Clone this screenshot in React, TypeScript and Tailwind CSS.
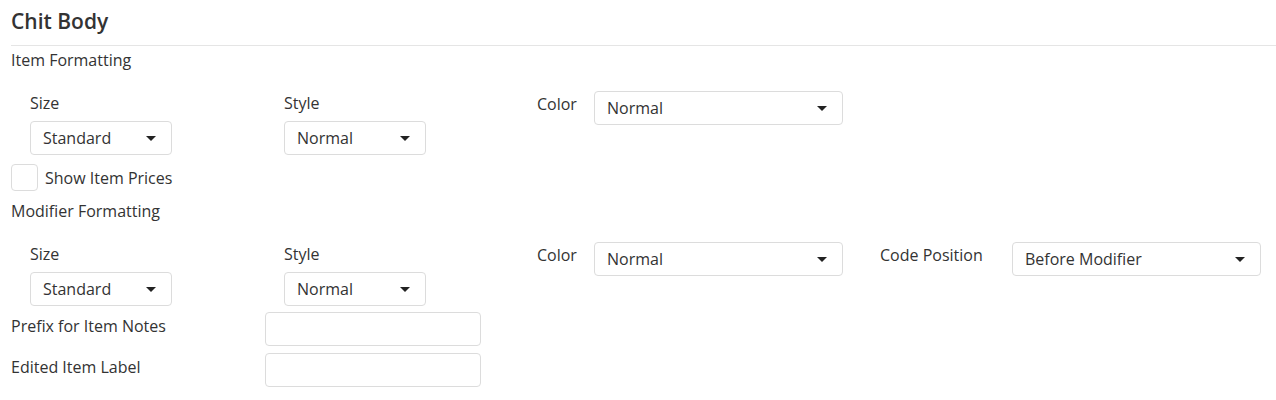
import type { ReactNode } from 'react'

function Caret() {
  return (
    <svg width="10" height="5" viewBox="0 0 10 5" className="shrink-0">
      <path d="M0 0 L10 0 L5 5 Z" fill="#222" />
    </svg>
  )
}

function Select({ value, width }: { value: string; width: string }) {
  return (
    <div
      className={`${width} h-[34px] flex items-center justify-between pl-[12px] pr-[15px] border border-[#dcdcdc] rounded-[4px] bg-white text-[#333]`}
    >
      <span>{value}</span>
      <Caret />
    </div>
  )
}

function Stacked({ label, children, width }: { label: string; children: ReactNode; width: string }) {
  return (
    <div className={`${width} shrink-0 flex flex-col`}>
      <div className="leading-[24px]">{label}</div>
      <div className="mt-[6px]">{children}</div>
    </div>
  )
}

function Inline({ label, children, width, labelWidth }: { label: string; children: ReactNode; width: string; labelWidth: string }) {
  return (
    <div className={`${width} shrink-0 flex items-start`}>
      <div className={`${labelWidth} leading-[24px] pt-[1px]`}>{label}</div>
      {children}
    </div>
  )
}

function TextRow({ label }: { label: string }) {
  return (
    <div className="flex items-start">
      <div className="w-[254px] leading-[24px] pt-[2px]">{label}</div>
      <input className="w-[216px] h-[34px] border border-[#dcdcdc] rounded-[4px] bg-white outline-none" />
    </div>
  )
}

export default function App() {
  return (
    <div className="w-[1276px] h-[400px] bg-white text-[#333] text-[16px] font-['Open_Sans',sans-serif] pl-[11px]">
      <div className="pt-[7px] pb-[10px] border-b border-[#e5e5e5] text-[21px] leading-[28px] font-semibold text-[#333]">
        Chit Body
      </div>
      <div className="mt-[2px] leading-[24px]">Item Formatting</div>

      <div className="mt-[19px] pl-[19px] flex">
        <Stacked label="Size" width="w-[254px]">
          <Select value="Standard" width="w-[142px]" />
        </Stacked>
        <Stacked label="Style" width="w-[253px]">
          <Select value="Normal" width="w-[142px]" />
        </Stacked>
        <Inline label="Color" width="w-[343px]" labelWidth="w-[57px]">
          <Select value="Normal" width="w-[249px]" />
        </Inline>
      </div>

      <label className="mt-[9px] flex items-center gap-[7px]">
        <span className="w-[27px] h-[27px] border border-[#dcdcdc] rounded-[4px] bg-white" />
        <span className="leading-[24px]">Show Item Prices</span>
      </label>

      <div className="mt-[8px] leading-[24px]">Modifier Formatting</div>

      <div className="mt-[19px] pl-[19px] flex">
        <Stacked label="Size" width="w-[254px]">
          <Select value="Standard" width="w-[142px]" />
        </Stacked>
        <Stacked label="Style" width="w-[253px]">
          <Select value="Normal" width="w-[142px]" />
        </Stacked>
        <Inline label="Color" width="w-[343px]" labelWidth="w-[57px]">
          <Select value="Normal" width="w-[249px]" />
        </Inline>
        <Inline label="Code Position" width="w-[381px]" labelWidth="w-[132px]">
          <Select value="Before Modifier" width="w-[249px]" />
        </Inline>
      </div>

      <div className="mt-[6px] flex flex-col gap-[7px]">
        <TextRow label="Prefix for Item Notes" />
        <TextRow label="Edited Item Label" />
      </div>
    </div>
  )
}
